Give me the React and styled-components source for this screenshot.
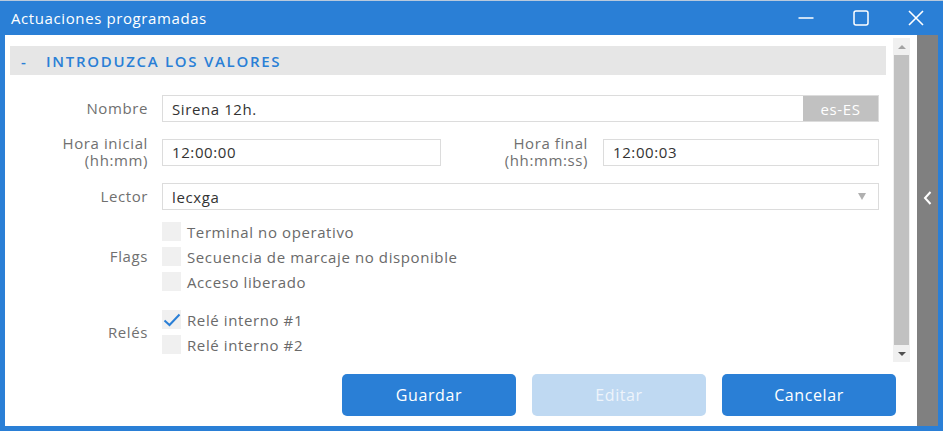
import React from 'react'
import styled, { createGlobalStyle } from 'styled-components'

const Global = createGlobalStyle`
  html, body {
    margin: 0;
    padding: 0;
    background: #ffffff;
  }
  * {
    box-sizing: border-box;
  }
`

const FONT = `'Open Sans', 'Noto Sans', Arial, sans-serif`
const BLUE = '#2a7fd6'

const Window = styled.div`
  width: 943px;
  height: 431px;
  background: ${BLUE};
  border-top: 1px solid #b9c9dc;
  display: flex;
  flex-direction: column;
  font-family: ${FONT};
  letter-spacing: 0.6px;
`

const TitleBar = styled.div`
  height: 34px;
  display: flex;
  align-items: center;
  padding-left: 11px;
  color: #ffffff;
  font-size: 15px;
`

const Title = styled.div`
  flex: 1;
  padding-bottom: 1px;
`

const WinButton = styled.div`
  width: 55px;
  height: 34px;
  display: flex;
  align-items: center;
  justify-content: center;
`

const Body = styled.div`
  flex: 1;
  display: flex;
  margin: 0 5px 5px 5px;
  background: #ffffff;
`

const Main = styled.div`
  flex: 1;
  display: flex;
  flex-direction: column;
`

const ScrollRow = styled.div`
  display: flex;
  height: 324px;
  margin-top: 3px;
  padding-right: 7px;
`

const Content = styled.div`
  flex: 1;
  padding: 8px 7px 0 5px;
  overflow: hidden;
`

const SectionHeader = styled.div`
  height: 29px;
  background: #e6e6e6;
  display: flex;
  align-items: center;
  padding-left: 11px;
  color: ${BLUE};
  font-size: 15px;
  font-weight: 600;
  letter-spacing: 1.7px;
`

const Dash = styled.span`
  width: 25px;
`

const Form = styled.div`
  padding: 20px 7px 0 0;
  display: flex;
  flex-direction: column;
`

const Row = styled.div`
  display: flex;
  align-items: center;
  margin-top: ${p => p.$mt || 0}px;
`

const Label = styled.div`
  width: ${p => p.$w || 138}px;
  margin-right: ${p => p.$mr || 14}px;
  text-align: right;
  color: #707070;
  font-size: 15px;
  line-height: 17px;
  flex-shrink: 0;
`

const Input = styled.div`
  height: 27px;
  border: 1px solid #dcdcdc;
  display: flex;
  align-items: center;
  padding-left: 9px;
  color: #333333;
  font-size: 15px;
  flex: ${p => (p.$w ? 'none' : 1)};
  width: ${p => (p.$w ? p.$w + 'px' : 'auto')};
`

const InputText = styled.span`
  flex: 1;
`

const Lang = styled.div`
  align-self: stretch;
  width: 75px;
  background: #c1c1c1;
  color: #ffffff;
  display: flex;
  align-items: center;
  justify-content: center;
  font-size: 15px;
`

const Caret = styled.span`
  width: 0;
  height: 0;
  border-left: 4px solid transparent;
  border-right: 4px solid transparent;
  border-top: 7px solid #b0b0b0;
  margin-right: 12px;
`

const Checks = styled.div`
  display: flex;
  flex-direction: column;
  gap: 6px;
`

const CheckRow = styled.div`
  display: flex;
  align-items: center;
  height: 19px;
  color: #6a6a6a;
  font-size: 15px;
`

const Box = styled.div`
  width: 19px;
  height: 19px;
  background: #f0f0f0;
  margin-right: 6px;
  display: flex;
  align-items: center;
  justify-content: center;
`

const Scrollbar = styled.div`
  width: 17px;
  background: #f0f0f0;
  display: flex;
  flex-direction: column;
`

const Arrow = styled.div`
  height: 17px;
  display: flex;
  align-items: center;
  justify-content: center;
`

const Tri = styled.span`
  width: 0;
  height: 0;
  border-left: 4px solid transparent;
  border-right: 4px solid transparent;
  ${p => (p.$up
    ? 'border-bottom: 4px solid #a3a3a3;'
    : 'border-top: 4px solid #505050;')}
`

const Thumb = styled.div`
  flex: 1;
  margin: 0 1px 0 1px;
  background: #c1c1c1;
`

const Footer = styled.div`
  flex: 1;
  display: flex;
  justify-content: flex-end;
  align-items: flex-start;
  padding: 12px 21px 0 0;
  gap: 16px;
`

const Button = styled.div`
  width: 174px;
  height: 42px;
  border-radius: 5px;
  background: ${p => (p.$disabled ? '#bfd9f2' : BLUE)};
  color: ${p => (p.$disabled ? '#eef4fb' : '#ffffff')};
  display: flex;
  align-items: center;
  justify-content: center;
  font-size: 16px;
`

const SidePanel = styled.div`
  width: 21px;
  background: #808080;
  display: flex;
  justify-content: center;
  padding-top: 155px;
`

function Check() {
  return (
    <svg width="18" height="14" viewBox="0 0 18 14">
      <path d="M1.5 7.5 L6.5 12 L16.5 1.5" fill="none" stroke={BLUE} strokeWidth="2" />
    </svg>
  )
}

function CheckItem({ label, checked }) {
  return (
    <CheckRow>
      <Box>{checked && <Check />}</Box>
      {label}
    </CheckRow>
  )
}

export default function App() {
  return (
    <>
      <Global />
      <Window>
        <TitleBar>
          <Title>Actuaciones programadas</Title>
          <WinButton>
            <svg width="16" height="16" viewBox="0 0 16 16">
              <path d="M0.5 8 H15.5" stroke="#fff" strokeWidth="1.5" />
            </svg>
          </WinButton>
          <WinButton>
            <svg width="16" height="16" viewBox="0 0 16 16">
              <rect x="1" y="1" width="14" height="14" rx="2" fill="none" stroke="#fff" strokeWidth="1.5" />
            </svg>
          </WinButton>
          <WinButton>
            <svg width="16" height="16" viewBox="0 0 16 16">
              <path d="M1 1 L15 15 M15 1 L1 15" stroke="#fff" strokeWidth="1.6" />
            </svg>
          </WinButton>
        </TitleBar>
        <Body>
          <Main>
            <ScrollRow>
              <Content>
                <SectionHeader>
                  <Dash>-</Dash>
                  INTRODUZCA LOS VALORES
                </SectionHeader>
                <Form>
                  <Row>
                    <Label>Nombre</Label>
                    <Input>
                      <InputText>Sirena 12h.</InputText>
                      <Lang>es-ES</Lang>
                    </Input>
                  </Row>
                  <Row $mt={13}>
                    <Label>Hora inicial<br />(hh:mm)</Label>
                    <Input $w={279}>12:00:00</Input>
                    <Label $w={147} $mr={15}>Hora final<br />(hh:mm:ss)</Label>
                    <Input>12:00:03</Input>
                  </Row>
                  <Row $mt={14}>
                    <Label>Lector</Label>
                    <Input>
                      <InputText>lecxga</InputText>
                      <Caret />
                    </Input>
                  </Row>
                  <Row $mt={12}>
                    <Label>Flags</Label>
                    <Checks>
                      <CheckItem label="Terminal no operativo" />
                      <CheckItem label="Secuencia de marcaje no disponible" />
                      <CheckItem label="Acceso liberado" />
                    </Checks>
                  </Row>
                  <Row $mt={19}>
                    <Label>Relés</Label>
                    <Checks>
                      <CheckItem label="Relé interno #1" checked />
                      <CheckItem label="Relé interno #2" />
                    </Checks>
                  </Row>
                </Form>
              </Content>
              <Scrollbar>
                <Arrow><Tri $up /></Arrow>
                <Thumb />
                <Arrow><Tri /></Arrow>
              </Scrollbar>
            </ScrollRow>
            <Footer>
              <Button>Guardar</Button>
              <Button $disabled>Editar</Button>
              <Button>Cancelar</Button>
            </Footer>
          </Main>
          <SidePanel>
            <svg width="10" height="16" viewBox="0 0 10 16">
              <path d="M7.5 2 L2 8 L7.5 14" fill="none" stroke="#fff" strokeWidth="2" />
            </svg>
          </SidePanel>
        </Body>
      </Window>
    </>
  )
}
